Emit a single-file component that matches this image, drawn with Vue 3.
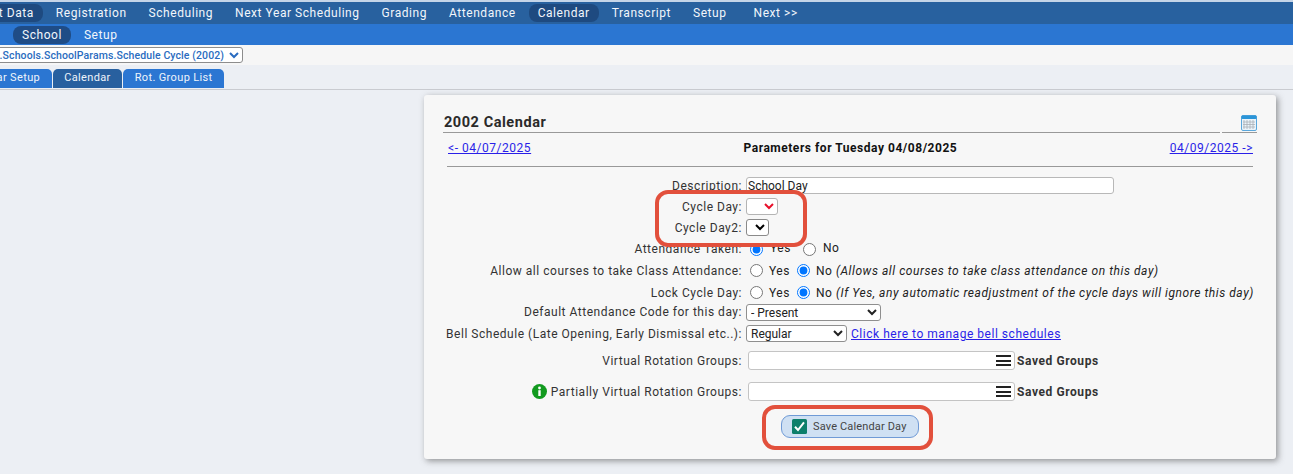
<script setup>
const mainNav = ['Registration', 'Scheduling', 'Next Year Scheduling', 'Grading', 'Attendance', 'Calendar', 'Transcript', 'Setup', 'Next >>']
</script>

<template>
  <div class="page">
    <nav class="main-nav">
      <a class="pill first active">Student Data</a>
      <a v-for="n in mainNav" :key="n" class="pill" :class="{ active: n === 'Calendar', last: n === 'Next >>' }">{{ n }}</a>
    </nav>
    <nav class="sub-nav">
      <a class="pill active">School</a>
      <a class="pill">Setup</a>
    </nav>
    <div class="select-row">
      <select class="path-select"><option>District.Schools.SchoolParams.Schedule Cycle (2002)</option></select>
    </div>
    <div class="tabs">
      <a class="tab">Calendar Setup</a>
      <a class="tab current">Calendar</a>
      <a class="tab">Rot. Group List</a>
    </div>
    <main class="content">
      <section class="card">
        <header class="title-row">
          <h1>2002 Calendar</h1>
          <div class="title-icon">
            <svg width="16" height="16" viewBox="0 0 16 16">
              <rect x="0.5" y="0.5" width="15" height="15" rx="1.5" fill="#eaf3fa" stroke="#5aa7dc"/>
              <rect x="0.5" y="0.5" width="15" height="3.5" rx="1" fill="#2b95d8"/>
              <path d="M3 5v9M6 5v9M9 5v9M12 5v9M2 7h12M2 9.5h12M2 12h12" stroke="#a9b0b6" stroke-width=".8" fill="none"/>
            </svg>
          </div>
        </header>
        <div class="date-row">
          <a class="link">&lt;- 04/07/2025</a>
          <strong>Parameters for Tuesday 04/08/2025</strong>
          <a class="link">04/09/2025 -&gt;</a>
        </div>
        <hr class="rule" />
        <div class="form">
          <label class="row r-desc"><span class="lbl">Description:</span><span class="val"><input class="text desc" value="School Day" /></span></label>
          <div class="row r-cycle"><span class="lbl">Cycle Day:</span><span class="val"><select class="mini red"><option>&nbsp;&nbsp;&nbsp;</option></select></span></div>
          <div class="row r-cycle"><span class="lbl">Cycle Day2:</span><span class="val"><select class="mini"><option></option></select></span></div>
          <div class="row r-radio"><span class="lbl">Attendance Taken:</span><span class="val radios up"><input type="radio" name="a" checked /><span class="opt">Yes</span><input type="radio" name="a" /><span class="opt">No</span></span></div>
          <div class="row r-radio"><span class="lbl">Allow all courses to take Class Attendance:</span><span class="val radios"><input type="radio" name="b" /><span class="opt">Yes</span><input type="radio" name="b" checked /><span class="opt">No <i>(Allows all courses to take class attendance on this day)</i></span></span></div>
          <div class="row r-radio"><span class="lbl">Lock Cycle Day:</span><span class="val radios"><input type="radio" name="c" /><span class="opt">Yes</span><input type="radio" name="c" checked /><span class="opt">No <i>(If Yes, any automatic readjustment of the cycle days will ignore this day)</i></span></span></div>
          <div class="row r-select tight"><span class="lbl">Default Attendance Code for this day:</span><span class="val"><select class="sel code"><option>- Present</option></select></span></div>
          <div class="row r-select after-tight"><span class="lbl">Bell Schedule (Late Opening, Early Dismissal etc..):</span><span class="val"><select class="sel bell"><option>Regular</option></select><a class="link manage">Click here to manage bell schedules</a></span></div>
          <div class="row r-group first-group"><span class="lbl">Virtual Rotation Groups:</span><span class="val"><span class="group-box"><span class="burger"></span></span><b class="saved">Saved Groups</b></span></div>
          <div class="row r-group"><span class="lbl">
            <svg class="info" width="15" height="15" viewBox="0 0 15 15"><circle cx="7.5" cy="7.5" r="7.5" fill="#129a1f"/><rect x="6.3" y="6.2" width="2.4" height="5.8" fill="#fff"/><circle cx="7.5" cy="4" r="1.4" fill="#fff"/></svg>
            Partially Virtual Rotation Groups:</span><span class="val"><span class="group-box"><span class="burger"></span></span><b class="saved">Saved Groups</b></span></div>
        </div>
        <div class="actions">
          <button class="save" type="button">
            <svg width="15" height="15" viewBox="0 0 15 15"><rect width="15" height="15" rx="1.5" fill="#0d7f6b"/><path d="M3 7.8l3 3.2 6-7.6" stroke="#fff" stroke-width="2" fill="none"/></svg>
            Save Calendar Day
          </button>
        </div>
      </section>
    </main>
    <div class="mark mark-cycle"></div>
    <div class="mark mark-save"></div>
  </div>
</template>

<style>
html, body { margin: 0; background: #eceff4; overflow: hidden; }
</style>

<style scoped>
.page { position: relative; width: 1293px; height: 474px; overflow: hidden; font-family: Roboto, "Liberation Sans", sans-serif; font-size: 12px; letter-spacing: .52px; color: #222; background: #eceff4; }
.main-nav, .sub-nav { display: flex; align-items: center; color: #f2f6fb; font-size: 12px; letter-spacing: .55px; }
.main-nav { box-sizing: border-box; height: 24px; border-top: 2px solid #c5d5e8; background: #28619f; margin-left: -51px; }
.sub-nav { height: 21px; background: #2b76d2; padding-left: 13px; gap: 4px; }
.pill { padding: 2px 9px 2px; border-radius: 8px; line-height: 14px; white-space: nowrap; margin-right: 4px; }
.main-nav .pill.active { background: #1e4a80; }
.sub-nav .pill.active { background: #1f4c86; }
.pill.last { margin-left: 5px; }
.sub-nav .pill { margin-right: 0; }
.select-row { height: 20px; background: #f6f6f6; display: flex; align-items: center; margin-left: -40px; }
.path-select { width: 283px; height: 16px; font: 500 10.5px Roboto, sans-serif; letter-spacing: .1px; color: #2a6cc0; background: #fff; border: 1px solid #8d8d8d; border-radius: 3px; padding: 0; }
.tabs { box-sizing: border-box; height: 25px; display: flex; align-items: flex-end; gap: 1px; border-bottom: 1px solid #c9cbd0; margin-left: -51px; }
.tab { box-sizing: border-box; height: 19px; line-height: 18px; padding: 0 11.5px; background: #2b76d2; color: #eef4fb; font-size: 11px; letter-spacing: .36px; border-radius: 5px 5px 0 0; white-space: nowrap; margin-bottom: 1px; }
.tab.current { background: #28609f; }
.content { padding: 5px 0 0 424px; }
.card { box-sizing: border-box; width: 852px; height: 364px; background: #f7f7f7; border-radius: 3px; box-shadow: 2px 2px 6px rgba(70, 70, 70, .55); padding: 0 19px; }
.title-row { height: 38px; display: flex; align-items: stretch; gap: 2px; }
.title-row h1 { flex: 1; box-sizing: border-box; margin: 0; padding: 19px 0 0 1px; font-size: 14.5px; letter-spacing: .55px; font-weight: 700; color: #2a2a2a; line-height: 18px; border-bottom: 1px solid #999; }
.title-icon { box-sizing: border-box; width: 35px; display: flex; justify-content: flex-end; align-items: flex-end; border-bottom: 1px solid #999; padding-bottom: 1px; }
.date-row { display: flex; justify-content: space-between; align-items: center; height: 29px; padding: 0 4px 0 5px; }
.date-row strong { color: #111; letter-spacing: .53px; }
.link { color: #2a1fe8; text-decoration: underline; font-size: 12px; letter-spacing: .53px; }
.rule { border: 0; border-top: 1px solid #999; margin: 4px 4px 0; }
.form { margin-top: 8px; }
.row { display: grid; grid-template-columns: 299px 1fr; column-gap: 4px; align-items: center; }
.lbl { color: #333; white-space: nowrap; display: flex; justify-content: flex-end; align-items: center; gap: 4px; }
.val { display: flex; align-items: center; }
.r-desc { height: 21px; }
.r-cycle { height: 21px; }
.r-radio { height: 22px; }
.r-select { height: 20.5px; }
.r-select.tight { margin-top: -2px; }
.r-select.after-tight { margin-top: 1px; }
.r-group { height: 31px; }
.first-group { margin-top: 1px; }
.text { box-sizing: border-box; padding: 0 1px; font: 12px Roboto, sans-serif; color: #222; height: 17px; background: #fff; border: 1px solid #b8b8b8; border-radius: 3px; outline: 0; }
.desc { width: 368px; }
.mini { width: 32px; height: 17px; background: #fff; border: 1px solid #b4b4b4; border-radius: 3px; padding: 0; }
.mini:not(.red) { width: 23px; border-color: #8a8a8a; }
.mini.red { color: #e8102a; }
.sel { height: 17px; background: #fff; border: 1px solid #8f8f8f; border-radius: 3px; font: 12px Roboto, sans-serif; color: #222; padding: 0; }
.code { width: 135px; }
.bell { width: 101px; }
.manage { margin-left: 4px; }
.radios input { margin: 0 6px 0 4px; width: 13px; height: 13px; position: relative; top: -1px; }
.radios .opt { margin-right: 3px; white-space: nowrap; }
.radios .opt i { letter-spacing: .56px; }
.radios.up input { margin-right: 7px; top: 0; }
.radios.up .opt { margin-right: 8px; position: relative; top: -1px; }
.group-box { box-sizing: border-box; width: 267px; height: 19px; margin-left: 2px; background: #fff; border: 1px solid #c4c4c4; border-radius: 3px; position: relative; display: block; }
.burger { position: absolute; right: 3px; top: 3px; width: 15px; height: 11px; box-sizing: border-box; border-top: 2px solid #222; border-bottom: 2px solid #222; }
.burger::after { content: ""; position: absolute; left: 0; right: 0; top: 2.5px; height: 2px; background: #222; }
.saved { margin-left: 2px; color: #333; font-size: 12px; letter-spacing: .58px; }
.info { flex: none; }
.actions { display: flex; justify-content: center; margin-top: 8px; }
.save { display: inline-flex; align-items: center; gap: 6px; box-sizing: border-box; width: 138px; height: 23px; padding: 0 0 0 10px; background: #cfe0f3; border: 1px solid #6f9ad6; border-radius: 9px; color: #444; font: 11px Roboto, sans-serif; letter-spacing: .15px; }
.mark { position: absolute; box-sizing: border-box; border: 4px solid #e2503c; border-radius: 13px; pointer-events: none; }
.mark-cycle { left: 655px; top: 190px; width: 152px; height: 57px; }
.mark-save { left: 762px; top: 405px; width: 171px; height: 45px; }
</style>
